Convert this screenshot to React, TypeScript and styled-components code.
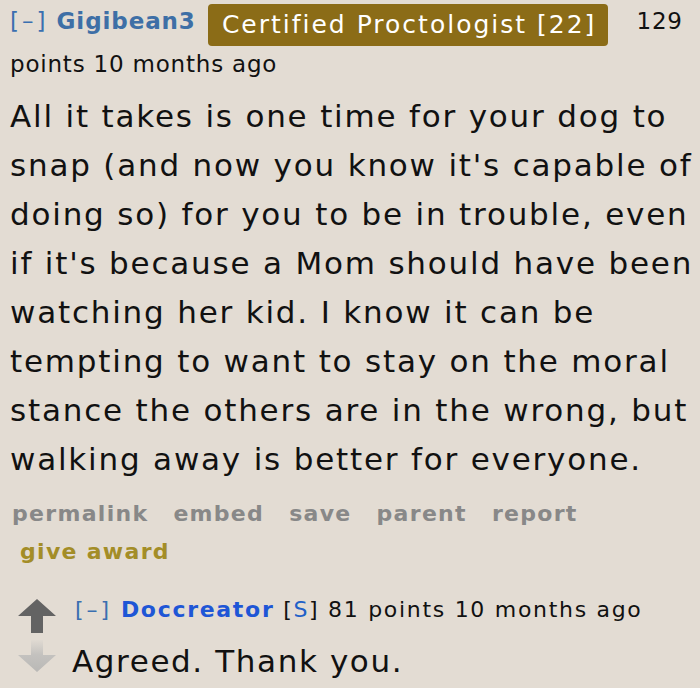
import styled, { createGlobalStyle } from "styled-components";

const GlobalStyle = createGlobalStyle`
  html, body {
    margin: 0;
    padding: 0;
    background: #e3dcd3;
  }
  body {
    font-family: "DejaVu Sans", Verdana, sans-serif;
    color: #111;
  }
`;

function UpArrow() {
  return (
    <svg width="38" height="35" viewBox="0 0 38 35">
      <path d="M19 0 L38 17 L25 17 L25 34 L13 34 L13 17 L0 17 Z" fill="#636363" />
    </svg>
  );
}

function DownArrow() {
  return (
    <svg width="38" height="33" viewBox="0 0 38 33">
      <defs>
        <linearGradient id="dn" x1="0" y1="0" x2="0" y2="1">
          <stop offset="0" stopColor="#e0dad2" />
          <stop offset="0.45" stopColor="#c4c2bf" />
          <stop offset="1" stopColor="#b9b8b6" />
        </linearGradient>
      </defs>
      <path d="M13 0 L25 0 L25 15 L38 15 L19 32 L0 15 L13 15 Z" fill="url(#dn)" />
    </svg>
  );
}

function App() {
  return (
    <>
      <GlobalStyle />
      <Page>
        <Tagline>
          <Toggle>[–]</Toggle> <Author>Gigibean3</Author> <Flair>Certified Proctologist [22]</Flair>{" "}
          <Score>129</Score> points 10 months ago
        </Tagline>
        <Body>
          All it takes is one time for your dog to snap (and now you know it's capable of doing so) for you to
          be in trouble, even if it's because a Mom should have been watching her kid. I know it can be
          tempting to want to stay on the moral stance the others are in the wrong, but walking away is better
          for everyone.
        </Body>
        <Buttons>
          <Action>permalink</Action>
          <Action>embed</Action>
          <Action>save</Action>
          <Action>parent</Action>
          <Action>report</Action>
          <Award>give award</Award>
        </Buttons>
        <Child>
          <Votes>
            <UpArrow />
            <DownArrow />
          </Votes>
          <ChildEntry>
            <ChildTagline>
              <Toggle>[–]</Toggle> <ChildAuthor>Doccreator</ChildAuthor> <Submitter>[<span>S</span>]</Submitter>{" "}
              81 points 10 months ago
            </ChildTagline>
            <ChildBody>Agreed. Thank you.</ChildBody>
          </ChildEntry>
        </Child>
      </Page>
    </>
  );
}

const Page = styled.div`
  padding: 0 4px 0 10px;
  width: 700px;
  box-sizing: border-box;
`;

const Tagline = styled.div`
  font-size: 23px;
  line-height: 42px;
  letter-spacing: 0.8px;
  color: #111;
`;

const Toggle = styled.span`
  color: #3a6fb0;
  font-weight: normal;
  letter-spacing: 3px;
`;

const Author = styled.span`
  color: #3e6fa6;
  font-weight: bold;
  letter-spacing: 0.9px;
`;

const Flair = styled.span`
  display: inline-block;
  background: #8b6c17;
  color: #fff;
  font-size: 25px;
  line-height: 42px;
  letter-spacing: 2px;
  padding: 0 12px 0 14px;
  border-radius: 4px;
  margin: 4px 20px -3px 4px;
  vertical-align: top;
`;

const Score = styled.span``;

const Body = styled.p`
  margin: 7px 0 0 0;
  font-size: 31px;
  line-height: 49px;
  letter-spacing: 1.8px;
  color: #111;
`;

const Buttons = styled.div`
  display: flex;
  flex-wrap: wrap;
  column-gap: 25px;
  margin-top: 11px;
  padding-left: 2px;
  font-size: 22px;
  line-height: 38px;
  letter-spacing: 1.3px;
  font-weight: bold;
`;

const Action = styled.span`
  color: #888888;
`;

const Award = styled.span`
  color: #a38d27;
  padding-left: 8px;
  width: 100%;
`;

const Child = styled.div`
  display: flex;
  margin-top: 8px;
`;

const Votes = styled.div`
  display: flex;
  flex-direction: column;
  gap: 6px;
  padding: 20px 0 0 8px;
  width: 52px;
`;

const ChildEntry = styled.div`
  display: flex;
  flex-direction: column;
  padding-left: 2px;
`;

const ChildTagline = styled.div`
  font-size: 22px;
  line-height: 38px;
  letter-spacing: 1.7px;
  margin-top: 12px;
  padding-left: 3px;
`;

const ChildAuthor = styled.span`
  color: #1e56d6;
  font-weight: bold;
`;

const Submitter = styled.span`
  color: #111;
  & span {
    color: #2060c8;
  }
`;

const ChildBody = styled.div`
  font-size: 31px;
  line-height: 50px;
  letter-spacing: 1.6px;
  margin-top: 7px;
`;

export default App;
